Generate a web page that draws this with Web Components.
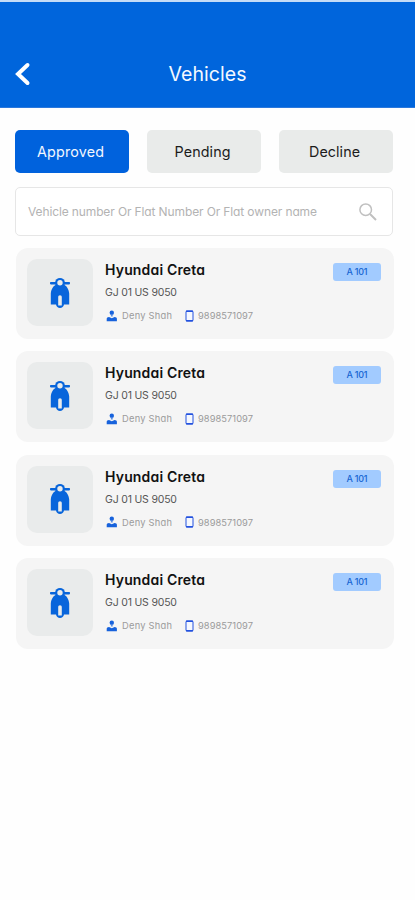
<!DOCTYPE html>
<html lang="en"><head><meta charset="utf-8"><title>Vehicles</title>
<style>body{margin:0;background:#fefefe;font-family:Inter,"Open Sans",sans-serif;font-feature-settings:"cv11"}</style></head>
<body><vehicles-page></vehicles-page>
<script>
// Inline label whose tracking is adjusted to fill a given width.
customElements.define('fit-text', class extends HTMLElement {
  connectedCallback() {
    if (!this.shadowRoot) this.attachShadow({mode:'open'}).innerHTML =
      '<style>:host{display:block;flex:none;white-space:nowrap}span{display:inline-block;white-space:nowrap}</style><span></span>';
    const s = this.shadowRoot.querySelector('span');
    s.textContent = this.getAttribute('text');
    const w = +this.getAttribute('width');
    this.style.width = w + 'px';
    s.style.letterSpacing = (w - s.getBoundingClientRect().width) / (s.textContent.length - 1) + 'px';
  }
});
customElements.define('app-header', class extends HTMLElement {
  constructor() { super(); this.attachShadow({mode:'open'}).innerHTML = `
<style>:host{display:grid;grid-template-columns:30px 1fr 30px;align-items:center;box-sizing:border-box;height:108px;padding:39px 8px 0;background:#0065dc;color:#f4f9ff;border-top:2px solid #c5dcf7;border-bottom:1px solid #2b78dc;font-size:19.5px;line-height:28px}
fit-text{justify-self:center}svg{display:block}</style>
<svg width="30" height="30" viewBox="0 0 30 30"><path d="M19.5 6 L10 15 L19.5 24" fill="none" stroke="#fff" stroke-width="4" stroke-linecap="round"/></svg>
<fit-text text="Vehicles" width="78"></fit-text>`; }
});
customElements.define('tab-button', class extends HTMLElement {
  constructor() { super(); this.attachShadow({mode:'open'}).innerHTML = `
<style>:host{display:flex;align-items:center;justify-content:center;box-sizing:border-box;height:43px;padding-right:3px;border-radius:5px;background:#e9ebea;color:#1c1c1c;font-size:14.3px;line-height:20px}
:host([active]){background:#0062dd;color:#f2f7ff}</style><slot></slot>`; }
});
customElements.define('search-box', class extends HTMLElement {
  constructor() { super(); this.attachShadow({mode:'open'}).innerHTML = `
<style>:host{display:flex;align-items:center;justify-content:space-between;box-sizing:border-box;height:49px;margin:14px 0 12px;padding:0 14px 0 12px;border:1px solid #e6e6e6;border-radius:5px;background:#fff;color:#b3b3b3;font-size:12px;line-height:18px}</style>
<fit-text text="Vehicle number Or Flat Number Or Flat owner name" width="289"></fit-text>
<svg width="20" height="20" viewBox="0 0 20 20" fill="none" stroke="#c0c0c0"><circle cx="7.7" cy="7.7" r="5.8" stroke-width="1.5"/><path d="M12 12 L18 18" stroke-width="2"/></svg>`; }
});
customElements.define('vehicle-card', class extends HTMLElement {
  constructor() { super(); this.attachShadow({mode:'open'}).innerHTML = `
<style>:host{display:flex;box-sizing:border-box;width:378px;height:91px;padding:11px 13px 0 11px;border-radius:12px;background:#f5f5f5}
.thumb{display:flex;align-items:center;justify-content:center;width:66px;height:67px;border-radius:10px;background:#e9ebeb;margin-right:12px}
.info{flex:1}.name{font-size:14px;font-weight:600;line-height:20px;color:#111;margin-top:1px}
.plate{font-size:10.5px;line-height:16px;color:#555;margin-top:5px}
.meta{display:flex;align-items:center;margin-top:7px;font-size:9.3px;line-height:15px;color:#9b9b9b}
.meta svg{margin-right:4px}.meta .phone{margin:0 3px 0 12px}
.badge{display:flex;align-items:center;justify-content:center;width:48px;height:18px;margin-top:4px;border-radius:3px;background:#a2cbff;color:#1765d2;font-size:9px;font-weight:500;line-height:14px}svg{display:block}</style>
<div class="thumb"><svg width="20" height="32" viewBox="0 0 20 32"><g fill="#0865db"><rect y="5" width="20" height="2.4" rx=".8"/><path d="M6.5 7.5 H13.5 C16.5 8.5 18.8 12 19.2 16.5 V27.5 H14 C13.6 29.5 12 31 10 31 S6.4 29.5 6 27.5 H.8 V16.5 C1.2 12 3.5 8.5 6.5 7.5Z"/><circle cx="10" cy="5.8" r="4.9"/></g><circle cx="10" cy="5.8" r="2.7" fill="#e9ebeb"/><path d="M8.2 28.5 V19.8 Q8.2 18.2 10 18.2 T11.8 19.8 V28.5Z" fill="#e9ebeb"/></svg></div>
<div class="info"><fit-text class="name" text="Hyundai Creta" width="100"></fit-text>
<fit-text class="plate" text="GJ 01 US 9050" width="72"></fit-text>
<div class="meta"><svg width="13" height="12" viewBox="0 0 13 12"><circle cx="6.8" cy="2.7" r="2.2" fill="#1762dc"/><path d="M5.9 4.5H7.7V6.5H5.9Z" fill="#5d90e2"/><path d="M1.7 11.3V8.6Q1.7 7.2 4 7L6.8 8.3L9.6 7Q11.9 7.2 11.9 8.6V11.3Z" fill="#1762dc"/></svg>
<fit-text text="Deny Shah" width="50"></fit-text>
<svg class="phone" width="11" height="12" viewBox="0 0 11 12"><rect x="2" y="1" width="7" height="10" rx="1" fill="#f5f8ff" stroke="#2453df"/><path d="M2 1.3H9M2 10.7H9" stroke="#2453df" stroke-width="1.4"/></svg>
<fit-text text="9898571097" width="55"></fit-text></div></div>
<div class="badge"><fit-text text="A 101" width="21"></fit-text></div>`; }
});
customElements.define('vehicles-page', class extends HTMLElement {
  constructor() { super(); this.attachShadow({mode:'open'}).innerHTML = `
<style>:host{display:block;height:900px;overflow:hidden}main{padding:22px 22px 0 15px}
nav{display:grid;grid-template-columns:repeat(3,114px);justify-content:space-between}
.list{display:grid;gap:12.4px;padding-left:1px}</style>
<app-header></app-header><main>
<nav><tab-button active><fit-text text="Approved" width="67"></fit-text></tab-button><tab-button><fit-text text="Pending" width="56"></fit-text></tab-button><tab-button><fit-text text="Decline" width="51"></fit-text></tab-button></nav>
<search-box></search-box>
<div class="list"><vehicle-card></vehicle-card><vehicle-card></vehicle-card><vehicle-card></vehicle-card><vehicle-card></vehicle-card></div></main>`; }
});
</script></body></html>
